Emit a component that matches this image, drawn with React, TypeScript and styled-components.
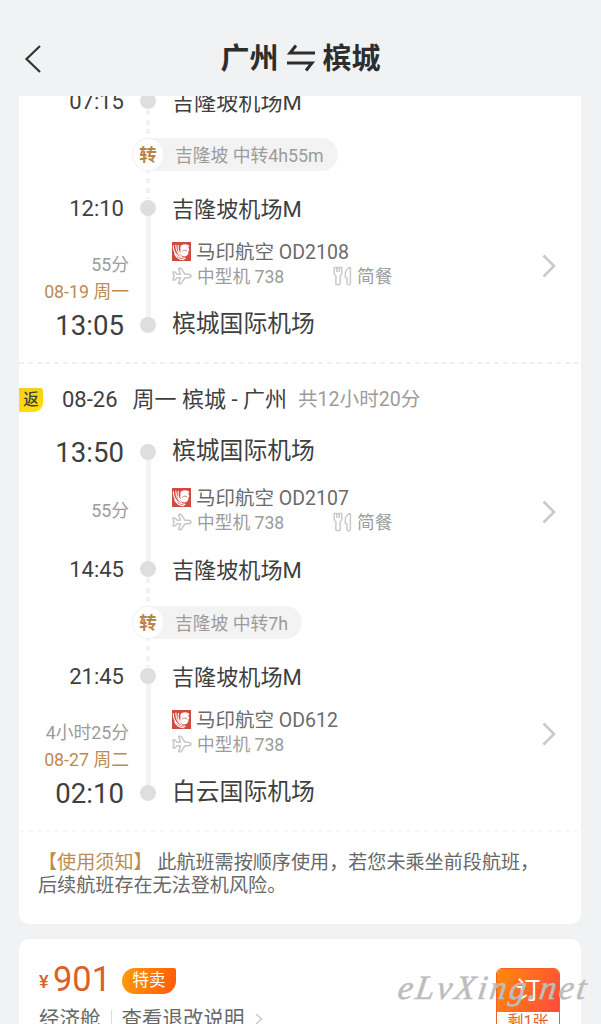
import React from 'react';
import styled, { createGlobalStyle, css } from 'styled-components';

const Global = createGlobalStyle`
  * { box-sizing: border-box; }
  body {
    margin: 0;
    background: #f1f2f4;
    font-family: Roboto, "Noto Sans CJK SC", sans-serif;
    color: #3f3f3f;
  }
`;

const Page = styled.div`
  height: 1024px;
  overflow: hidden;
  display: flex;
  flex-direction: column;
  background: #f1f2f4;
`;

const Header = styled.header`
  flex: none;
  height: 96px;
  padding: 22px 24px 0;
  display: grid;
  grid-template-columns: 40px 1fr 40px;
  align-items: center;
`;

const BackIcon = styled.svg`
  width: 18px;
  height: 30px;
`;

const Title = styled.h1`
  margin: 0;
  display: flex;
  justify-content: center;
  align-items: center;
  gap: 7px;
  font-size: 29px;
  line-height: 36px;
  font-weight: 700;
  color: #2d2d2d;

  svg {
    position: relative;
    top: -1px;
  }
`;

const Scroller = styled.main`
  flex: 1;
  min-height: 0;
  overflow: hidden;
  padding: 0 20px 0 19px;
`;

const Card = styled.section`
  background: #fff;
  border-radius: 10px;
  overflow: hidden;
`;

const TripCard = styled(Card)`
  margin-top: -11px;
  height: 839px;
`;

const cols = css`
  display: grid;
  grid-template-columns: 110px 38px 1fr;
`;

const StationRow = styled.div`
  ${cols}
  grid-template-rows: 32px;
  align-items: start;
`;

const Time = styled.span<{ $big?: boolean }>`
  font-size: ${p => (p.$big ? 27.6 : 22)}px;
  line-height: ${p => (p.$big ? 34 : 33)}px;
  text-align: right;
  padding-right: 5px;
`;

const Dot = styled.i`
  width: 16px;
  height: 16px;
  margin-top: 8px;
  border-radius: 50%;
  background: #dedede;
  justify-self: center;
  z-index: 1;
`;

const StationName = styled.span<{ $big?: boolean }>`
  font-size: ${p => (p.$big ? 23.8 : 22.1)}px;
  line-height: ${p => (p.$big ? 31 : 34)}px;
  padding-left: 5px;
`;

const FlightRow = styled.div`
  ${cols}
  height: 85px;
`;

const Rail = styled.i`
  width: 5px;
  margin: -16px 0;
  justify-self: center;
  background: #f3f3f3;
`;

const Duration = styled.div<{ $dated?: boolean }>`
  display: flex;
  flex-direction: column;
  justify-content: ${p => (p.$dated ? 'flex-end' : 'center')};
  padding-top: ${p => (p.$dated ? 0 : 2)}px;
  padding-bottom: ${p => (p.$dated ? 4 : 0)}px;
  text-align: right;
  font-size: 17.8px;
  line-height: 26.5px;
  color: #9c9c9c;
`;

const DateText = styled.span`
  color: #bd8b50;
`;

const FlightBody = styled.div<{ $shift: number }>`
  display: flex;
  justify-content: space-between;
  padding: ${p => 15 + p.$shift}px 25px 0 5px;
`;

const Airline = styled.div`
  display: flex;
  align-items: center;
  height: 25px;
  gap: 5px;
  font-size: 19.5px;
  line-height: 25px;
  color: #6b6b6b;

  span {
    padding-top: 2px;
  }
`;

const Facts = styled.div`
  display: flex;
  height: 24px;
  font-size: 17.7px;
  line-height: 24px;
  color: #9c9c9c;
`;

const Fact = styled.span<{ $w?: number }>`
  display: flex;
  align-items: center;
  gap: 5px;
  width: ${p => (p.$w ? p.$w + 'px' : 'auto')};

  span {
    padding-top: 2px;
  }
`;

const Chevron = styled.svg`
  width: 14px;
  height: 24px;
  margin-top: 15px;
`;

const TransferRow = styled.div`
  ${cols}
  height: 75px;
`;

const DottedRail = styled(Rail)`
  width: 4px;
  margin: -7px 0;
  background: repeating-linear-gradient(to bottom, #f2f2f2 0 5px, transparent 5px 9.7px);
`;

const TransferPill = styled.div`
  z-index: 1;
  align-self: center;
  justify-self: start;
  margin-left: -35px;
  height: 33px;
  padding-right: 14px;
  border-radius: 17px;
  background: #f3f3f3;
  display: flex;
  align-items: center;
  gap: 11px;
  font-size: 17.8px;
  line-height: 33px;
  color: #9c9c9c;

  span {
    padding-top: 1px;
  }
`;

const TransferMark = styled.b`
  width: 32px;
  height: 33px;
  border: 1px solid #f3f3f3;
  border-radius: 50%;
  background: #fff;
  font-size: 17.5px;
  line-height: 32px;
  text-align: center;
  color: #b98448;
`;

const Divider = styled.div<{ $faint?: boolean }>`
  height: 2px;
  background: repeating-linear-gradient(
    to right,
    ${p => (p.$faint ? '#f8f8f8' : '#f0f0f0')} 0 5px,
    transparent 5px 8.8px
  );
`;

const ReturnHeader = styled.div`
  height: 72px;
  display: flex;
  align-items: center;
  font-size: 22px;
  line-height: 30px;
`;

const ReturnBadge = styled.span`
  width: 24px;
  height: 24px;
  margin-right: 19px;
  border-radius: 0 3px 9px 0;
  background: linear-gradient(180deg, #f4cf17, #ffe00a);
  font-size: 15.5px;
  line-height: 24px;
  text-align: center;
  font-weight: 500;
`;

const Route = styled.span`
  margin-left: 15px;
`;

const Total = styled.span`
  margin-left: 11px;
  font-size: 19.6px;
  color: #9c9c9c;
`;

const Notice = styled.p`
  margin: 0;
  padding: 19px 19px 0;
  font-size: 19.1px;
  line-height: 23px;
  color: #686868;
`;

const NoticeTag = styled.span`
  color: #bd8b50;
`;

const FareCard = styled(Card)`
  margin-top: 15px;
  height: 120px;
  padding: 19px 21px 0 20px;
  display: flex;
  justify-content: space-between;
`;

const PriceLine = styled.div`
  display: flex;
  align-items: center;
  height: 42px;
  color: #dc602a;
`;

const Yen = styled.span`
  font-size: 18px;
  font-weight: 500;
  padding-top: 4px;
  width: 14px;
`;

const Amount = styled.span`
  font-size: 34.4px;
  line-height: 42px;
`;

const SaleTag = styled.span`
  margin-left: 11px;
  margin-top: 3px;
  width: 54px;
  height: 26px;
  border-radius: 13px 2px 13px 13px;
  background: linear-gradient(100deg, #ff9d0a, #ff5a0a);
  color: #fff;
  font-size: 16.5px;
  line-height: 26px;
  text-align: center;
`;

const CabinLine = styled.div`
  display: flex;
  align-items: center;
  height: 38px;
  font-size: 20.5px;
  line-height: 38px;
  color: #686868;
`;

const Separator = styled.i`
  width: 1px;
  height: 18px;
  margin: 0 10px 0 10px;
  background: #dcdcdc;
`;

const LinkArrow = styled.svg`
  width: 8px;
  height: 12px;
  margin-left: 10px;
`;

const BookButton = styled.div`
  margin-top: 10px;
  width: 64px;
  height: 80px;
  border-radius: 6px;
  border: 1px solid #f4602a;
  overflow: hidden;
  text-align: center;
  color: #e0622f;
  font-size: 16px;
  line-height: 20px;
`;

const BookTop = styled.div`
  height: 43px;
  background: linear-gradient(115deg, #ff8a0a, #ff4a3c);
  color: #fff;
  font-size: 25px;
  line-height: 43px;
`;

const Watermark = styled.svg`
  position: absolute;
  left: 392px;
  top: 962px;
  width: 209px;
  height: 50px;
`;

function AirlineLogo() {
  return (
    <svg width="19" height="19" viewBox="0 0 19 19">
      <rect width="19" height="19" fill="#cf4a41" />
      <path d="M8.4 4.6C10 1.8 15.4 1.4 17.6 4.4L16.2 5L17.4 8.2L16.4 9.2C16.8 12.6 14.8 14.6 12 14.4C9 14.2 8 11 8.4 8.4Z" fill="#fff" />
      <path
        d="M1.2 3.2C1.4 10.4 4.6 15.6 13.6 16.4M3.8 2.8C3.8 8.6 6 12.6 10 14.6M6.4 3C5.6 7.4 6.6 10.4 8.6 12.4M2.4 11.6C4.6 15.8 8 18 12.4 17.8"
        fill="none"
        stroke="#fff"
        strokeWidth="1.1"
      />
      <path d="M10.2 9.2C12 7.8 13.6 8 15 9" stroke="#dd7a72" strokeWidth="1" fill="none" />
    </svg>
  );
}

function PlaneIcon() {
  return (
    <svg width="20" height="18" viewBox="0 0 20 18" fill="none" stroke="#c9c9c9" strokeWidth="1.6" strokeLinejoin="round">
      <path d="M1 5H3L5.2 7.2H8.4L6.6 1.4H9L13 7.2H16.6C17.8 7.4 19 8.2 19 9S17.8 10.6 16.6 10.8H13L9 16.6H6.6L8.4 10.8H5.2L3 13H1L2 9Z" />
    </svg>
  );
}

function MealIcon() {
  return (
    <svg width="19" height="20" viewBox="0 0 19 20" fill="none" stroke="#c9c9c9" strokeWidth="1.5" strokeLinejoin="round">
      <path d="M1.2 1.4H8.8V7C8.8 8.8 7.8 9.6 7 10L7.2 17.2C7.2 19.2 2.8 19.2 2.8 17.2L3 10C2.2 9.6 1.2 8.8 1.2 7ZM3.8 1.4V6M6.2 1.4V6" />
      <path d="M17.4 1.4V17.4C17.4 19.2 14 19.2 14 17.4V12.2L12.2 11.2C11.8 6.4 13.4 1.8 17.4 1.4Z" />
    </svg>
  );
}

function Station({ time, name, big }: { time: string; name: string; big?: boolean }) {
  return (
    <StationRow>
      <Time $big={big}>{time}</Time>
      <Dot />
      <StationName $big={big}>{name}</StationName>
    </StationRow>
  );
}

interface FlightProps {
  duration: string;
  date?: string;
  code: string;
  meal?: boolean;
  shift?: number;
}

function Flight({ duration, date, code, meal, shift = 0 }: FlightProps) {
  return (
    <FlightRow>
      <Duration $dated={!!date}>
        <span>{duration}</span>
        {date && <DateText>{date}</DateText>}
      </Duration>
      <Rail />
      <FlightBody $shift={shift}>
        <div>
          <Airline>
            <AirlineLogo />
            <span>马印航空 {code}</span>
          </Airline>
          <Facts>
            <Fact $w={161}>
              <PlaneIcon />
              <span>中型机 738</span>
            </Fact>
            {meal && (
              <Fact>
                <MealIcon />
                <span>简餐</span>
              </Fact>
            )}
          </Facts>
        </div>
        <Chevron viewBox="0 0 14 24" fill="none" stroke="#c9c9c9" strokeWidth="2.6">
          <path d="M1.5 1.5L12 12L1.5 22.5" />
        </Chevron>
      </FlightBody>
    </FlightRow>
  );
}

function Transfer({ text }: { text: string }) {
  return (
    <TransferRow>
      <span />
      <DottedRail />
      <TransferPill>
        <TransferMark>转</TransferMark>
        <span>{text}</span>
      </TransferPill>
    </TransferRow>
  );
}

const Outbound = styled.div`
  height: 277px;
`;

const Inbound = styled.div`
  height: 394px;
`;

export default function App() {
  return (
    <Page>
      <Global />
      <Header>
        <BackIcon viewBox="0 0 18 30" fill="none" stroke="#333" strokeWidth="2.2">
          <path d="M16 2L2.5 15L16 28" />
        </BackIcon>
        <Title>
          广州
          <svg width="30" height="28" viewBox="0 0 30 28" fill="none" stroke="#2d2d2d" strokeWidth="3">
            <path d="M29 9H4L10 1.5M1 19H26L20 26.5" />
          </svg>
          槟城
        </Title>
      </Header>
      <Scroller>
        <TripCard>
          <Outbound>
            <Station time="07:15" name="吉隆坡机场M" />
            <Transfer text="吉隆坡 中转4h55m" />
            <Station time="12:10" name="吉隆坡机场M" />
            <Flight duration="55分" date="08-19 周一" code="OD2108" meal />
            <Station time="13:05" name="槟城国际机场" big />
          </Outbound>
          <Divider />
          <ReturnHeader>
            <ReturnBadge>返</ReturnBadge>
            08-26
            <Route>周一 槟城 - 广州</Route>
            <Total>共12小时20分</Total>
          </ReturnHeader>
          <Inbound>
            <Station time="13:50" name="槟城国际机场" big />
            <Flight duration="55分" code="OD2107" meal shift={2} />
            <Station time="14:45" name="吉隆坡机场M" />
            <Transfer text="吉隆坡 中转7h" />
            <Station time="21:45" name="吉隆坡机场M" />
            <Flight duration="4小时25分" date="08-27 周二" code="OD612" />
            <Station time="02:10" name="白云国际机场" big />
          </Inbound>
          <Divider $faint />
          <Notice>
            <NoticeTag>【使用须知】</NoticeTag> 此航班需按顺序使用，若您未乘坐前段航班，
            <br />
            后续航班存在无法登机风险。
          </Notice>
        </TripCard>
        <FareCard>
          <div>
            <PriceLine>
              <Yen>¥</Yen>
              <Amount>901</Amount>
              <SaleTag>特卖</SaleTag>
            </PriceLine>
            <CabinLine>
              经济舱
              <Separator />
              查看退改说明
              <LinkArrow viewBox="0 0 8 12" fill="none" stroke="#ccc" strokeWidth="1.6">
                <path d="M1 1L6.5 6L1 11" />
              </LinkArrow>
            </CabinLine>
          </div>
          <BookButton>
            <BookTop>订</BookTop>
            剩1张
          </BookButton>
        </FareCard>
      </Scroller>
      <Watermark viewBox="0 0 209 50">
        <text
          x="10"
          y="37"
          transform="skewX(-8)"
          fontFamily="'Liberation Serif', serif"
          fontStyle="italic"
          fontSize="34"
          fill="#bdbdbd"
          stroke="#bdbdbd"
          strokeWidth="0.5"
          textLength="188"
        >
          eLvXing.net
        </text>
      </Watermark>
    </Page>
  );
}
